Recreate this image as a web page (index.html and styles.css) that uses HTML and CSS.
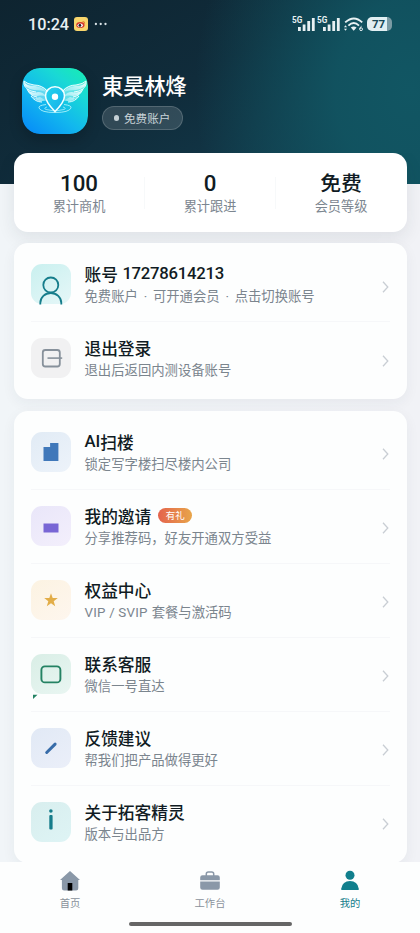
FILE: index.html
```html
<!DOCTYPE html>
<html lang="zh-CN">
<head>
<meta charset="utf-8">
<meta name="viewport" content="width=device-width, initial-scale=1">
<title>我的</title>
<link rel="stylesheet" href="styles.css">
</head>
<body>
<div class="app">
  <header class="hero">
    <div class="status">
      <span class="time">10:24</span>
      <svg class="weibo" width="14" height="14" viewBox="0 0 14 14"><rect width="14" height="14" rx="3" fill="#f8d66c"/><ellipse cx="6.4" cy="8.1" rx="4.2" ry="3" fill="#d43a2e"/><ellipse cx="6.2" cy="8.3" rx="2.7" ry="1.9" fill="#fff"/><circle cx="5.9" cy="8.4" r="1.4" fill="#222"/><path d="M8.6 4.6q2.3-.4 2 2" fill="none" stroke="#df7a2c" stroke-width="1"/></svg>
      <svg class="more" width="14" height="4" viewBox="0 0 14 4" fill="#dce5e9"><circle cx="1.9" cy="2" r="1.15"/><circle cx="6.7" cy="2" r="1.15"/><circle cx="11.5" cy="2" r="1.15"/></svg>
      <div class="signals">
        <div class="signal"><span>5G</span><svg width="17" height="14" viewBox="0 0 17 14"><path d="M0 10h2.8v4H0zM4.7 7.4h2.8V14H4.7zM9.3 4h2.8v10H9.3zM13.9 1h2.8v13h-2.8z"/></svg></div>
        <div class="signal"><span>5G</span><svg width="17" height="14" viewBox="0 0 17 14"><path d="M0 10h2.8v4H0zM4.7 7.4h2.8V14H4.7zM9.3 4h2.8v10H9.3zM13.9 1h2.8v13h-2.8z"/></svg></div>
        <svg class="wifi" width="20" height="15" viewBox="0 0 20 15"><g fill="none" stroke="#e8f1f3" stroke-width="1.9"><path d="M1.2 5.4Q10-2.6 18.2 5.4"/><path d="M4.4 8.6Q9.8 3.6 15 8.6"/></g><path d="M6.8 10.6Q9.7 8.3 12.6 10.6L9.7 13.7z" fill="#e8f1f3"/><path d="M1.5 8.3l1.5 2H0zM1.5 13.8l1.5-2H0z" fill="#e8f1f3"/><path d="M17.6 9.2q-1.8 1-1.8 2.9" fill="none" stroke="#e8f1f3"/><circle cx="17.1" cy="12.2" r="1.4" fill="none" stroke="#e8f1f3"/></svg>
        <div class="battery"><span>77</span></div>
      </div>
    </div>
    <div class="profile">
      <svg class="avatar" width="66" height="66" viewBox="0 0 66 66">
        <defs>
          <linearGradient id="logo" x1=".1" y1="1" x2=".9" y2="0"><stop offset="0" stop-color="#078cf8"/><stop offset=".4" stop-color="#12b7ee"/><stop offset=".75" stop-color="#19d9d5"/><stop offset="1" stop-color="#18ebb5"/></linearGradient>
          <linearGradient id="feather" x1="0" y1="0" x2="1" y2="1"><stop offset="0" stop-color="#fff"/><stop offset="1" stop-color="#b8f3fa" stop-opacity=".45"/></linearGradient>
          <linearGradient id="pin" x1="0" y1="0" x2="1" y2="1"><stop offset="0" stop-color="#27d5ec"/><stop offset="1" stop-color="#12aeea"/></linearGradient>
          <g id="wing">
            <path d="M2 13Q0 17 5 21L8 23Q6 25 10 28L14 29Q13 32 18 33L24 33Q22 27 26 22Q20 17 12 17Q5 16 2 13Z" fill="#bff6fa" fill-opacity=".45"/>
            <path d="M2 13Q3 18 13 18Q21 19 25 24Q19 22 12 22Q2 21 2 13Z" fill="url(#feather)"/>
            <path d="M5 21Q9 26 16 24Q21 24 24 28Q18 27 15 28Q8 28 5 21ZM9 28Q14 31 18 29L23 32Q17 36 9 28Z" fill="url(#feather)"/>
            <path d="M2 13Q5 16 12 17Q20 17 25 23M2 13Q1 20 9 23L14 24M5 21Q8 28 15 29M9 28Q13 34 20 34" fill="none" stroke="#e8ffff" stroke-width="1"/>
          </g>
        </defs>
        <rect width="66" height="66" rx="18" fill="url(#logo)"/>
        <use href="#wing"/><use href="#wing" transform="translate(66 0) scale(-1 1)"/>
        <g fill="none" stroke="#a9f1fa"><path d="M24 36.5Q16 37.5 17 40Q19 44.5 33 44.5Q47 44.5 49 40Q50 37.5 42 36.5" stroke-width=".9"/><path d="M25 39Q21 40 24 41.5Q33 44.5 42 41.5Q45 40 41 39" stroke-width=".8"/></g>
        <path d="M33 43.5Q23.5 34 23.5 28A9.5 9.3 0 0 1 42.5 28Q42.5 34 33 43.5Z" fill="url(#pin)" stroke="#f2ffff" stroke-width="1.6"/>
        <circle cx="33" cy="28.8" r="3.2" fill="#fff"/>
      </svg>
      <div class="who">
        <div class="name">東昊林烽</div>
        <div class="pill"><i></i>免费账户</div>
      </div>
    </div>
  </header>

  <main class="content">
    <section class="card stats">
      <div class="stat"><b>100</b><span>累计商机</span></div>
      <div class="stat"><b>0</b><span>累计跟进</span></div>
      <div class="stat"><b class="cjk">免费</b><span>会员等级</span></div>
    </section>

    <section class="card list">
      <div class="row">
        <svg class="icon account" viewBox="0 0 40 40"><g fill="none" stroke="#167d8b" stroke-width="1.8"><circle cx="19.8" cy="21" r="7.5"/><path d="M9.3 40.6V39a10.5 10 0 0 1 21 0v1.6"/></g></svg>
        <div class="text"><div class="title">账号<span class="latin number">17278614213</span></div><div class="sub">免费账户<span class="dot">·</span>可开通会员<span class="dot">·</span>点击切换账号</div></div>
        <svg class="chevron" viewBox="0 0 7 12"><path d="M1 .8L5.8 6L1 11.2"/></svg>
      </div>
      <div class="row">
        <svg class="icon logout" viewBox="0 0 40 40"><g fill="none" stroke="#87919b" stroke-width="1.8"><rect x="11.8" y="12" width="17" height="16.5" rx="2.5"/><path d="M16.5 20.1h14.7" stroke-width="1.6"/></g></svg>
        <div class="text"><div class="title">退出登录</div><div class="sub">退出后返回内测设备账号</div></div>
        <svg class="chevron" viewBox="0 0 7 12"><path d="M1 .8L5.8 6L1 11.2"/></svg>
      </div>
    </section>

    <section class="card list">
      <div class="row">
        <svg class="icon building" viewBox="0 0 40 40"><path d="M12.5 15h6.6v-4h8.3v18H12.5z" fill="#4078ba"/></svg>
        <div class="text"><div class="title"><span class="latin">AI</span>扫楼</div><div class="sub">锁定写字楼扫尽楼内公司</div></div>
        <svg class="chevron" viewBox="0 0 7 12"><path d="M1 .8L5.8 6L1 11.2"/></svg>
      </div>
      <div class="row">
        <svg class="icon invite" viewBox="0 0 40 40"><path d="M12.5 17.5h15v9h-15z" fill="#7866d5"/></svg>
        <div class="text"><div class="title">我的邀请<span class="tag">有礼</span></div><div class="sub">分享推荐码，好友开通双方受益</div></div>
        <svg class="chevron" viewBox="0 0 7 12"><path d="M1 .8L5.8 6L1 11.2"/></svg>
      </div>
      <div class="row">
        <svg class="icon rights" viewBox="0 0 40 40"><path d="M20 13.300l1.700 4.800h5.100l-4.100 3.100 1.500 5-4.200-2.900-4.200 2.900 1.500-5-4.100-3.100h5.100z" fill="#e2ad48"/></svg>
        <div class="text"><div class="title">权益中心</div><div class="sub"><span class="latin vip">VIP / SVIP</span>套餐与激活码</div></div>
        <svg class="chevron" viewBox="0 0 7 12"><path d="M1 .8L5.8 6L1 11.2"/></svg>
      </div>
      <div class="row">
        <svg class="icon service" viewBox="0 0 40 40"><rect x="10.4" y="12.4" width="19" height="16" rx="3.5" fill="none" stroke="#248263" stroke-width="1.9"/><path d="M2 40.8h4.5L2 45z" fill="#248263"/></svg>
        <div class="text"><div class="title">联系客服</div><div class="sub">微信一号直达</div></div>
        <svg class="chevron" viewBox="0 0 7 12"><path d="M1 .8L5.8 6L1 11.2"/></svg>
      </div>
      <div class="row">
        <svg class="icon feedback" viewBox="0 0 40 40"><path d="M15.7 24.5l8.4-8.4" stroke="#376ca9" stroke-width="3" stroke-linecap="round"/></svg>
        <div class="text"><div class="title">反馈建议</div><div class="sub">帮我们把产品做得更好</div></div>
        <svg class="chevron" viewBox="0 0 7 12"><path d="M1 .8L5.8 6L1 11.2"/></svg>
      </div>
      <div class="row">
        <svg class="icon about" viewBox="0 0 40 40" fill="#167d8b"><circle cx="19.9" cy="9" r="1.8"/><rect x="18.3" y="13" width="3.3" height="14.5" rx="1"/></svg>
        <div class="text"><div class="title">关于拓客精灵</div><div class="sub">版本与出品方</div></div>
        <svg class="chevron" viewBox="0 0 7 12"><path d="M1 .8L5.8 6L1 11.2"/></svg>
      </div>
    </section>
  </main>

  <nav class="tabs">
    <div class="tab"><svg width="22" height="22" viewBox="0 0 22 22"><path d="M11 1L21 10h-1.7v8.3a2.2 2.2 0 0 1-2.2 2.2H5.1A2.2 2.2 0 0 1 2.9 18.300V10H1z" fill="#8a98a8"/><path d="M8.700 13h4.600v7.500H8.700z" fill="#000"/></svg>首页</div>
    <div class="tab"><svg width="22" height="22" viewBox="0 0 22 22" fill="#8a98a8"><path d="M7.300 6V4a2 2 0 0 1 2-2h3.400a2 2 0 0 1 2 2v2" fill="none" stroke="#8a98a8" stroke-width="1.500"/><path d="M1.200 10.200V7.500A2.300 2.300 0 0 1 3.500 5.200h15a2.300 2.300 0 0 1 2.300 2.300v2.700zM1.200 11.500h19.600v6a2.300 2.300 0 0 1-2.300 2.300h-15a2.300 2.300 0 0 1-2.300-2.300z"/></svg>工作台</div>
    <div class="tab active"><svg width="22" height="22" viewBox="0 0 22 22" fill="#117f8d"><circle cx="11" cy="5.300" r="4.500"/><path d="M2.300 20v-1.500Q3.500 11 11 11T19.700 18.500V20z"/></svg>我的</div>
    <div class="home-bar"></div>
  </nav>
</div>
</body>
</html>
```
FILE: styles.css
```css
* { box-sizing: border-box; }
body {
  margin: 0;
  font-family: "Noto Sans CJK SC", "Noto Sans", sans-serif;
  color: #101b23;
}
svg { display: block; flex: none; }
.app {
  width: 420px;
  height: 933px;
  overflow: hidden;
  display: flex;
  flex-direction: column;
  background: linear-gradient(90deg, #f1f5f8, #f1f2f6);
}

.hero {
  flex: none;
  height: 184px;
  background:
    radial-gradient(ellipse 215px 260px at 410px 90px, #115663 0%, rgba(17, 85, 98, .9) 35%, rgba(17, 80, 94, 0) 100%),
    linear-gradient(150deg, #0e2430 0%, #102c3b 45%, #123a4b 80%, #11495a 100%);
}
.status {
  display: flex;
  align-items: center;
  height: 48px;
  padding: 0 28px 0 28px;
}
.time {
  width: 40.500px;
  padding-top: 1px;
  font-family: Roboto, sans-serif;
  font-size: 16.200px;
  font-weight: 500;
  line-height: 20px;
  color: #e9f0f3;
  white-space: nowrap;
}
.weibo { margin-left: 5.500px; }
.more { margin-left: 6px; }
.signals {
  display: flex;
  align-items: center;
  margin-left: auto;
  height: 18px;
}
.signal {
  display: flex;
  align-items: flex-start;
  width: 25px;
  height: 17px;
  color: #e8f1f3;
  fill: #e8f1f3;
}
.signal span {
  width: 6px;
  font: 700 8.200px/8px Roboto, sans-serif;
  white-space: nowrap;
}
.signal svg { margin-top: 1px; }
.wifi { margin: 1px 3px 0 2px; }
.battery {
  width: 25px;
  height: 14px;
  border-radius: 5px;
  background: linear-gradient(90deg, #e1eff2 78%, #7b9ba4 78%);
  color: #174755;
  font: 700 11.500px/14px Roboto, sans-serif;
  padding-left: 5px;
}

.profile {
  display: flex;
  padding: 20px 0 0 22px;
}
.avatar {
  border-radius: 18px;
  box-shadow: 0 6px 14px rgba(0, 0, 0, .2);
}
.who { margin: 3px 0 0 14px; }
.name {
  font-size: 21.200px;
  font-weight: 500;
  line-height: 28px;
  color: #fff;
}
.pill {
  display: flex;
  align-items: center;
  width: 81px;
  height: 24px;
  margin-top: 7px;
  padding-left: 10.500px;
  border: 1px solid rgba(255, 255, 255, .17);
  border-radius: 12px;
  background: rgba(255, 255, 255, .14);
  font-size: 11.600px;
  line-height: 22px;
  color: #c9d3d8;
  white-space: nowrap;
}
.pill i {
  width: 5.500px;
  height: 5.500px;
  margin-right: 5px;
  border-radius: 50%;
  background: #c5d0d5;
}

.content {
  flex: 1;
  min-height: 0;
  padding: 0 13.500px;
  margin-top: -31.500px;
  overflow: hidden;
}
.card {
  border-radius: 14px;
  background: #fdfefe;
  box-shadow: 0 4px 14px rgba(30, 55, 80, .055);
}
.stats {
  display: flex;
  height: 79px;
  background: #fff;
  box-shadow: 0 6px 18px rgba(30, 45, 60, .09);
}
.stat {
  flex: 1;
  padding-top: 16px;
  text-align: center;
  background: linear-gradient(#f7f9fa, #f7f9fa) right 24px / 1px 32px no-repeat;
}
.stat:last-child { background: none; }
.stat b {
  display: block;
  height: 28px;
  font-family: Roboto, sans-serif;
  font-size: 22.300px;
  font-weight: 500;
  line-height: 28px;
}
.stat b.cjk {
  font-family: "Noto Sans CJK SC", sans-serif;
  font-size: 20.800px;
  line-height: 27px;
}
.stat span {
  display: block;
  font-size: 13.200px;
  line-height: 18px;
  color: #7c8690;
}
.list {
  margin-top: 11.500px;
  padding: 4px 17px;
}
.row {
  display: flex;
  align-items: center;
  height: 74px;
}
.row + .row {
  background: linear-gradient(#f6f7f9, #f6f7f9) top / 100% 1px no-repeat;
}
.icon {
  width: 40px;
  height: 40px;
  border-radius: 11px;
  overflow: visible;
}
.account { background: linear-gradient(145deg, #c9f0ef, #e6f7f8); }
.logout { background: #f1f1f2; }
.building { background: linear-gradient(145deg, #e1ebf5, #edf3fa); }
.invite { background: linear-gradient(145deg, #e9e6f9, #f3effc); }
.rights { background: linear-gradient(145deg, #fcf3e2, #fef6ee); }
.service { background: linear-gradient(145deg, #d9eee6, #e9f6f2); }
.feedback { background: linear-gradient(145deg, #e1e9f5, #ebeff9); }
.about { background: linear-gradient(145deg, #d8eeee, #def4f5); }
.text {
  flex: 1;
  margin-left: 14px;
  white-space: nowrap;
}
.title {
  display: flex;
  align-items: center;
  font-size: 16.700px;
  font-weight: 500;
  line-height: 24px;
}
.latin {
  font-family: Roboto, sans-serif;
  line-height: 1;
}
.title .latin { padding-top: 1.500px; }
.number {
  margin-left: 4.500px;
  letter-spacing: -.25px;
}
.tag {
  margin-left: 7px;
  width: 34px;
  height: 15.500px;
  border-radius: 8px;
  background: linear-gradient(90deg, #e4634d, #e8a54a);
  color: #fff;
  font-size: 9.500px;
  font-weight: 400;
  line-height: 15px;
  text-align: center;
}
.sub {
  font-size: 13.350px;
  line-height: 20px;
  color: #7b858e;
}
.dot {
  display: inline-block;
  width: 15px;
  font-family: Roboto, sans-serif;
  line-height: 1;
  text-align: center;
}
.vip {
  margin-right: 4px;
  letter-spacing: .2px;
}
.chevron {
  width: 7px;
  height: 12px;
  margin: 5px 1px 0 0;
  fill: none;
  stroke: #c9ced4;
  stroke-width: 1.300;
}

.tabs {
  flex: none;
  display: grid;
  grid-template-columns: repeat(3, 1fr);
  grid-template-rows: 60px 4px;
  height: 71px;
  background: #fdfefe;
}
.tab {
  display: flex;
  flex-direction: column;
  align-items: center;
  padding-top: 8px;
  font-size: 10.300px;
  line-height: 14px;
  color: #8a929b;
}
.tab svg { margin-bottom: 4px; }
.active { color: #167d8b; }
.home-bar {
  grid-column: 1 / 4;
  justify-self: center;
  width: 163px;
  height: 4px;
  border-radius: 2px;
  background: #666;
}
```
